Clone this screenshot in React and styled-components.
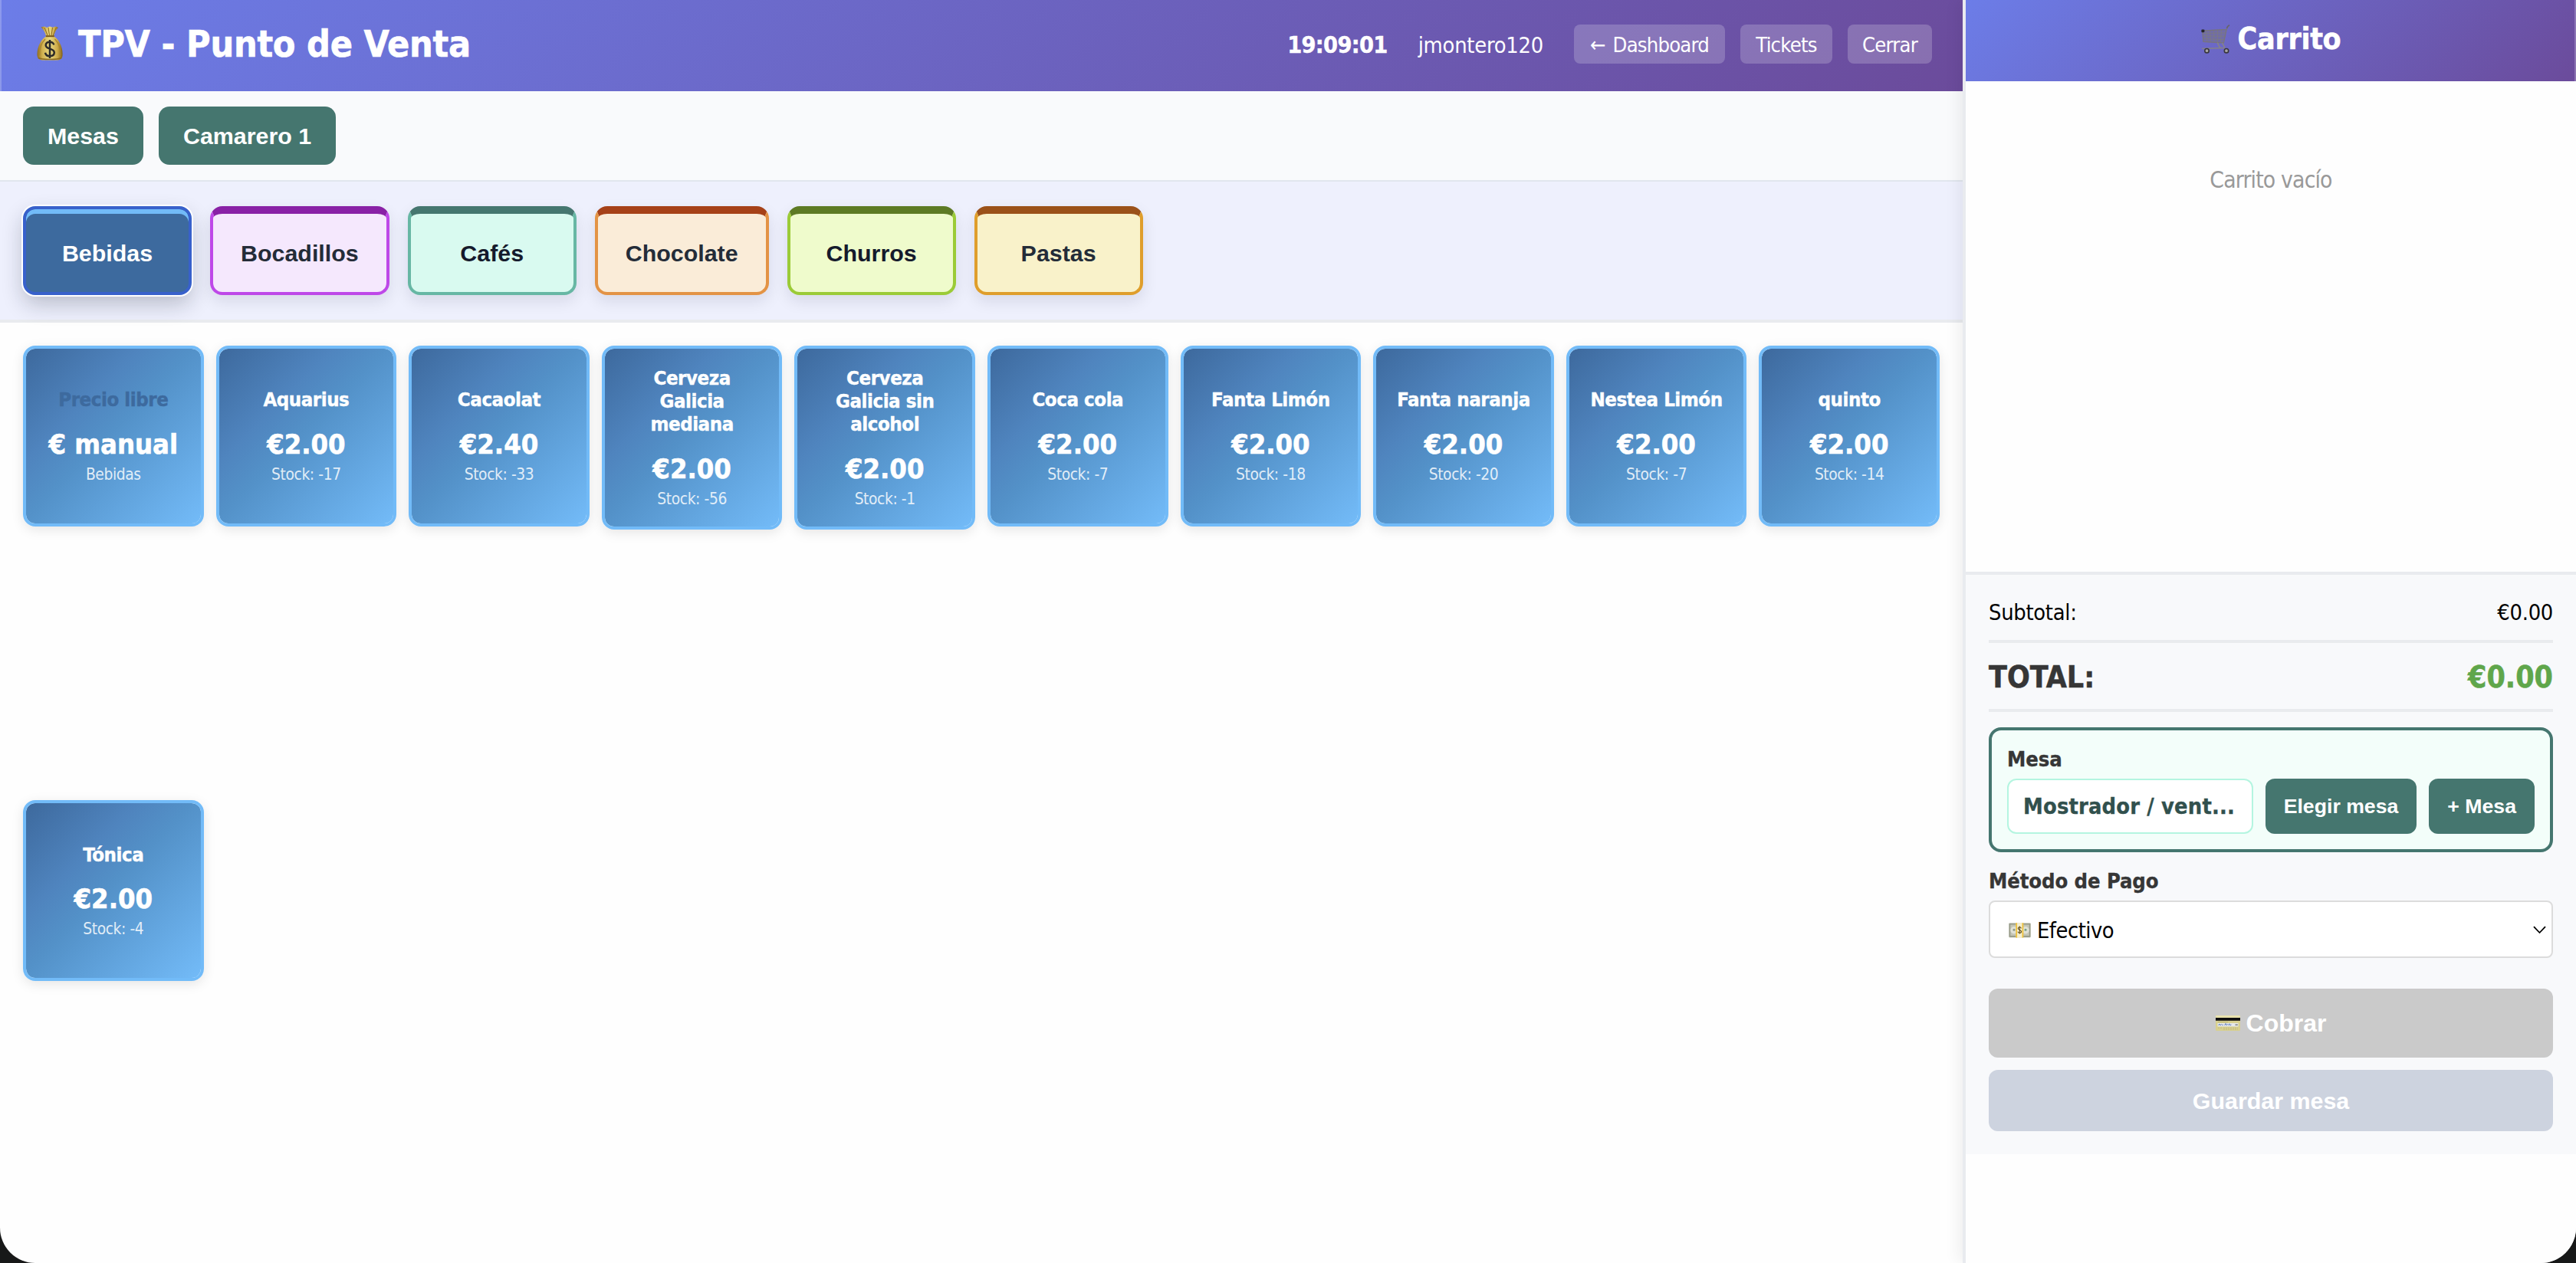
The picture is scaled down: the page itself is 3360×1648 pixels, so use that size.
import React from "react";
import styled, { createGlobalStyle } from "styled-components";

const tahoma = '"DejaVu Sans Condensed", "DejaVu Sans", sans-serif';
const arial = '"Liberation Sans", Arial, sans-serif';
const brandGradient = "linear-gradient(135deg, #6c7de8 0%, #6b4b9b 100%)";

const GlobalStyle = createGlobalStyle`
  *, *::before, *::after { box-sizing: border-box; }
  html { background: #171818; }
  body { margin: 0; background: #171818; font-family: ${tahoma}; }
  button { font-family: ${arial}; border: 0; padding: 0; margin: 0; }
  svg { display: block; flex: none; }
`;

const Screen = styled.div`
  display: flex;
  width: 100%;
  height: 100vh;
  overflow: hidden;
  background: #fefefe;
  border-radius: 0 0 46px 46px;
`;

const Main = styled.main`
  flex: 1;
  min-width: 0;
  display: flex;
  flex-direction: column;
`;

const Header = styled.header`
  display: flex;
  align-items: center;
  justify-content: space-between;
  height: 119px;
  padding: 0 40px 0 48px;
  color: #fff;
  background: ${brandGradient};
  box-shadow: inset 2px 0 0 rgba(255, 255, 255, 0.22);
`;

const Title = styled.h1`
  display: flex;
  align-items: center;
  gap: 20px;
  margin: 0 0 6px;
  font-size: 48px;
  font-weight: 700;
  letter-spacing: -0.25px;
  -webkit-text-stroke: 0.6px currentColor;
`;

const HeaderInfo = styled.div`
  display: flex;
  align-items: center;
  gap: 40px;
  margin-bottom: 2px;
`;

const Clock = styled.span`
  font-size: 30.4px;
  font-weight: 700;
  letter-spacing: -0.7px;
  -webkit-text-stroke: 0.4px currentColor;
`;

const UserName = styled.span`
  font-size: 28.8px;
  letter-spacing: -0.25px;
`;

const HeaderActions = styled.div`
  display: flex;
  gap: 20px;
  margin-bottom: 2px;
`;

const HeaderButton = styled.button`
  width: ${(p) => p.$width}px;
  height: 51px;
  padding-top: 2px;
  border-radius: 8px;
  color: #fff;
  background: rgba(255, 255, 255, 0.2);
  font-family: ${tahoma};
  font-size: 27.2px;
  letter-spacing: -0.8px;
  word-spacing: 3px;
  white-space: nowrap;
`;

const ToolBar = styled.div`
  display: flex;
  align-items: center;
  gap: 20px;
  height: 118px;
  padding: 0 30px;
  background: #f9fafc;
  border-bottom: 2px solid #e1e6ee;
`;

const ToolButton = styled.button`
  height: 76px;
  padding: 0 32px;
  border-radius: 14px;
  color: #fff;
  background: #45766f;
  font-size: 30.4px;
  font-weight: 700;
`;

const CategoryBar = styled.nav`
  display: flex;
  align-items: flex-start;
  gap: 24px;
  height: 184px;
  padding: 32px 30px 0;
  background: #eef0fd;
  border-bottom: 4px solid #e9ebef;
`;

const Category = styled.button`
  min-width: 220px;
  height: 116px;
  padding: 0 36px;
  border: 4px solid ${(p) => p.$border};
  border-top: 10px solid ${(p) => p.$top};
  border-radius: 16px;
  color: ${(p) => p.$color};
  background: ${(p) => p.$bg};
  box-shadow: 0 8px 20px rgba(15, 23, 42, 0.1);
  font-size: 30.4px;
  font-weight: 700;
`;

const ActiveCategory = styled(Category)`
  border-top-width: 4px;
  padding-top: 6px;
  box-shadow: inset 0 6px 0 #72bbf8, 0 0 0 2px #fff, 0 12px 28px rgba(15, 23, 42, 0.24);
`;

const ProductGrid = styled.section`
  flex: 1;
  display: grid;
  grid-template-columns: repeat(10, minmax(0, 1fr));
  gap: 16px;
  align-items: start;
  padding: 30px;
`;

const ProductCard = styled.article`
  display: flex;
  flex-direction: column;
  align-items: center;
  justify-content: center;
  min-height: 236px;
  padding: 23px 20px;
  border: 4px solid #72bbf8;
  border-radius: 16px;
  color: #fff;
  text-align: center;
  background: linear-gradient(135deg, #3d699d 0%, #4f84be 32%, #5391c8 48%, #73bbf8 100%) padding-box;
  box-shadow: 0 4px 16px rgba(0, 0, 0, 0.1);
`;

const ProductName = styled.div`
  margin-bottom: 21.5px;
  color: ${(p) => (p.$muted ? "#3d6a9e" : "#fff")};
  font-size: 25.6px;
  font-weight: 700;
  line-height: 30px;
  letter-spacing: -0.45px;
  -webkit-text-stroke: 0.4px currentColor;
`;

const ProductPrice = styled.div`
  margin-bottom: 4px;
  font-size: 36px;
  font-weight: 700;
  line-height: 44px;
  white-space: nowrap;
  -webkit-text-stroke: 0.6px currentColor;
`;

const ProductStock = styled.div`
  padding-top: 1px;
  color: rgba(255, 255, 255, 0.84);
  font-size: 20.8px;
  line-height: 25px;
  letter-spacing: -0.4px;
`;

const Cart = styled.aside`
  position: relative;
  display: flex;
  flex-direction: column;
  width: 800px;
  border-left: 4px solid #e9ebef;
  background: #fefefe;
  box-shadow: -4px 0 20px rgba(0, 0, 0, 0.07);
`;

const CartHeader = styled.h2`
  display: flex;
  align-items: center;
  justify-content: center;
  gap: 10px;
  height: 106px;
  margin: 0;
  padding-bottom: 5px;
  color: #fff;
  background: ${brandGradient};
  box-shadow: inset -2px 0 0 rgba(255, 255, 255, 0.22);
  font-size: 39px;
  font-weight: 700;
  letter-spacing: -0.3px;
  -webkit-text-stroke: 0.5px currentColor;
`;

const CartItems = styled.div`
  height: 640px;
  padding-top: 111px;
  color: #999;
  font-size: 29.8px;
  line-height: 36px;
  letter-spacing: -0.85px;
  text-align: center;
`;

const Checkout = styled.div`
  padding: 0 30px 30px;
  border-top: 4px solid #e9ebef;
  background: #f8f9fb;
`;

const SubtotalRow = styled.div`
  display: flex;
  align-items: center;
  justify-content: space-between;
  height: 85px;
  padding-top: 13px;
  font-size: 28.8px;
  letter-spacing: -0.3px;
`;

const TotalRow = styled.div`
  display: flex;
  align-items: center;
  justify-content: space-between;
  height: 94px;
  padding-top: 2px;
  border: solid #e9ebee;
  border-width: 4px 0;
  color: #363636;
  font-size: 39px;
  font-weight: 700;
  -webkit-text-stroke: 0.5px currentColor;
`;

const TotalAmount = styled.span`
  color: #5fa64b;
`;

const TableBox = styled.div`
  height: 163px;
  margin: 20px 0;
  padding: 20px;
  border: 4px solid #45766f;
  border-radius: 16px;
  background: #f3fefa;
`;

const Label = styled.div`
  height: 35px;
  margin-bottom: 8px;
  color: #363636;
  font-size: 27.2px;
  font-weight: 700;
  line-height: 35px;
  letter-spacing: -0.1px;
  -webkit-text-stroke: 0.3px currentColor;
`;

const TableControls = styled.div`
  display: flex;
  gap: 16px;
  height: 72px;
`;

const TableName = styled.div`
  flex: 1;
  padding: 0 19px;
  border: 2px solid #b4f5e0;
  border-radius: 12px;
  color: #31504d;
  background: #fff;
  font-size: 28.8px;
  font-weight: 700;
  line-height: 68px;
  letter-spacing: 0.15px;
  white-space: nowrap;
  -webkit-text-stroke: 0.3px currentColor;
`;

const TableButton = styled.button`
  padding: 0 24px;
  border-radius: 12px;
  color: #fff;
  background: #45766f;
  font-size: 26.67px;
  font-weight: 700;
  white-space: nowrap;
`;

const PaymentSelect = styled.div`
  display: flex;
  align-items: center;
  height: 75px;
  padding: 2px 7px 0 24px;
  border: 2px solid #dcdcdc;
  border-radius: 8px;
  background: #fff;
`;

const PaymentValue = styled.span`
  flex: 1;
  margin-left: 8px;
  font-size: 28.8px;
  letter-spacing: -0.5px;
`;

const ActionButton = styled.button`
  display: flex;
  align-items: center;
  justify-content: center;
  gap: 8px;
  width: 100%;
  height: ${(p) => p.$height}px;
  margin-top: ${(p) => p.$gap}px;
  border-radius: 12px;
  color: #fff;
  background: ${(p) => p.$bg};
  font-size: ${(p) => p.$size}px;
  font-weight: 700;
`;

const MoneyBagIcon = () => (
  <svg width="34" height="45" viewBox="0 0 34 45">
    <defs>
      <linearGradient id="bag" x1="0" x2="1">
        <stop offset="0" stopColor="#8d6a1f" />
        <stop offset="0.2" stopColor="#d0b04e" />
        <stop offset="0.5" stopColor="#e9d983" />
        <stop offset="0.8" stopColor="#cdaa47" />
        <stop offset="1" stopColor="#80601c" />
      </linearGradient>
    </defs>
    <path d="M5.5 1.6 10 .6l3 1.4 4-1.6 4 1.4 3.600-1.300 3.300 1.600C25 5 23 9 22.300 13H12C11 9 8.800 4.600 5.500 1.600Z" fill="url(#bag)" />
    <path d="m10 2 4 10M15 2l1.500 10M20.500 2l-1.500 10M25 2.500 21.300 12" stroke="#8a681f" strokeWidth="1" fill="none" />
    <path d="M12 13.500h10.500C28 16.500 33.500 26 33.600 36c.1 6-1.400 8.400-8 8.600H8.800C2.200 44.400.3 42 .5 36 .8 26 6.300 16.500 12 13.500Z" fill="url(#bag)" />
    <path d="M11 17C6 22 3.400 29 3.500 38M23.500 17c5 5 7.600 12 7.500 21" stroke="#a78431" strokeWidth="1.200" fill="none" />
    <path d="M2 41.500c5 2.600 25 2.600 30 0" stroke="#8d6c21" strokeWidth="1.600" fill="none" />
    <path d="M11.800 13.200h11" stroke="#76561a" strokeWidth="2" />
    <path d="M22.300 24.500c-.7-2.800-2.700-3.800-5.400-3.800-3 0-5.200 1.500-5.200 4.300 0 6 11.100 3.300 11.100 9.600 0 3-2.300 4.600-5.800 4.600-3.300 0-5.500-1.500-6-4.500M17 18v24" stroke="#2c2a28" strokeWidth="2.500" fill="none" />
  </svg>
);

const CartIcon = () => (
  <svg width="38" height="38" viewBox="0 0 38 38" fill="none">
    <path d="M2 7.500 33 6l-3.500 18L3 22Z" fill="#77727f" fillOpacity="0.45" />
    <path d="M2 11.500l30-.6M2.400 15l29 .2M2.800 18.500l27.800 1.200M6.500 8 8 22.500M11.500 7.600l1 15.100M16.500 7.400l.5 15.600M21.500 7l-.2 16.200M26.500 6.700l-1.200 17" stroke="#7b7884" strokeWidth="0.9" />
    <path d="M37 .8c-2.600 1.500-3.400 3.600-4 6.200L29.400 24 3 22.300 1.700 8 33 6.300" stroke="#77747d" strokeWidth="1.300" />
    <path d="M21 24c3 2.500 1 5 4.500 6M28 24c-.5 3 3.500 3.500 2 6.500L1 31.500" stroke="#85828a" strokeWidth="1.700" />
    <path d="M37 .8c-1.800.9-3 2-3.500 4" stroke="#66646b" strokeWidth="1.600" />
    <rect x=".4" y="6.600" width="4" height="3.600" rx="1" fill="#252529" />
    <circle cx="7.500" cy="34.200" r="2.700" fill="#a9a6a6" stroke="#38363b" strokeWidth="1.600" />
    <circle cx="33" cy="34.200" r="2.700" fill="#a9a6a6" stroke="#38363b" strokeWidth="1.600" />
  </svg>
);

const CashIcon = () => (
  <svg width="29" height="20" viewBox="0 0 29 20">
    <rect x=".3" y=".5" width="28.400" height="18.700" rx="1" fill="#a3a693" />
    <rect x="1.800" y="2" width="25.400" height="15.600" fill="#c3c5b5" stroke="#858977" strokeWidth=".7" />
    <circle cx="7" cy="9.800" r="4.700" fill="#dfe0d6" />
    <circle cx="22" cy="9.800" r="4.700" fill="#dfe0d6" />
    <circle cx="7" cy="9.200" r="1.500" fill="#8d9984" />
    <circle cx="22" cy="9.200" r="1.500" fill="#76a083" />
    <rect x="9.500" y=".2" width="9.600" height="19.300" fill="#f5efcf" />
    <path d="M10.200.2v19.300M18.400.2v19.300" stroke="#eebf35" strokeWidth="1.700" />
    <path d="M16.400 7.300c-.3-1-1-1.500-2.100-1.500-1.200 0-2 .6-2 1.700 0 2.300 4.300 1.500 4.300 4 0 1.200-.9 1.900-2.300 1.900-1.300 0-2.100-.6-2.300-1.700M14.300 4.600v10" stroke="#5e4a1c" strokeWidth="1.100" fill="none" />
  </svg>
);

const CardIcon = () => (
  <svg width="32" height="20" viewBox="0 0 32 20">
    <rect width="32" height="20" rx="1.200" fill="#d8d08f" />
    <rect width="32" height="3" rx="1" fill="#e9e3ae" />
    <rect y="3" width="32" height="3.800" fill="#111" />
    <path d="M3 8.600h13" stroke="#b5ae73" strokeWidth=".8" />
    <rect x="2.500" y="10" width="27" height="4.400" fill="#e6e9ea" />
    <path d="m3.500 13 1.500-2 1 2 1.500-1.600 1 1.200 1.500-.6m1.500 1 1.600-2.600.8 2.400 1.600-1.400 1 1.200 1.500-1.800.5 2 2-.8" stroke="#5b79bd" strokeWidth=".9" fill="none" />
    <path d="M25.500 12.200h3.300" stroke="#666" strokeWidth="1.200" />
    <path d="M3 16.300h5M10 16.300h19M10 18.200h19" stroke="#beb67a" strokeWidth=".8" strokeDasharray="2 1" />
  </svg>
);

const ChevronIcon = () => (
  <svg width="17" height="11" viewBox="0 0 17 11" fill="none">
    <path d="m1 1.200 7.500 7.800L16 1.200" stroke="#000" strokeWidth="1.800" strokeLinejoin="round" />
  </svg>
);

const categories = [
  { name: "Bocadillos", bg: "#f5e8fd", border: "#be48e8", top: "#8921a6", color: "#242c38" },
  { name: "Cafés", bg: "#d9faf0", border: "#67b7a4", top: "#45766f", color: "#151a2c" },
  { name: "Chocolate", bg: "#faecd8", border: "#e39345", top: "#a64118", color: "#242c38" },
  { name: "Churros", bg: "#effbcc", border: "#9bcb37", top: "#5d7a24", color: "#151a2c" },
  { name: "Pastas", bg: "#f9f2ca", border: "#df9e2b", top: "#9b5119", color: "#242c38" },
];

const products = [
  { name: "Precio libre", price: "€ manual", note: "Bebidas", muted: true },
  { name: "Aquarius", price: "€2.00", note: "Stock: -17" },
  { name: "Cacaolat", price: "€2.40", note: "Stock: -33" },
  { name: "Cerveza Galicia mediana", price: "€2.00", note: "Stock: -56" },
  { name: "Cerveza Galicia sin alcohol", price: "€2.00", note: "Stock: -1" },
  { name: "Coca cola", price: "€2.00", note: "Stock: -7" },
  { name: "Fanta Limón", price: "€2.00", note: "Stock: -18" },
  { name: "Fanta naranja", price: "€2.00", note: "Stock: -20" },
  { name: "Nestea Limón", price: "€2.00", note: "Stock: -7" },
  { name: "quinto", price: "€2.00", note: "Stock: -14" },
  { name: "Tónica", price: "€2.00", note: "Stock: -4" },
];

export default function App() {
  return (
    <>
      <GlobalStyle />
      <Screen>
        <Main>
          <Header>
            <Title>
              <MoneyBagIcon />
              TPV - Punto de Venta
            </Title>
            <HeaderInfo>
              <Clock>19:09:01</Clock>
              <UserName>jmontero120</UserName>
              <HeaderActions>
                <HeaderButton $width={197}>← Dashboard</HeaderButton>
                <HeaderButton $width={120}>Tickets</HeaderButton>
                <HeaderButton $width={110}>Cerrar</HeaderButton>
              </HeaderActions>
            </HeaderInfo>
          </Header>
          <ToolBar>
            <ToolButton>Mesas</ToolButton>
            <ToolButton>Camarero 1</ToolButton>
          </ToolBar>
          <CategoryBar>
            <ActiveCategory $bg="#3d6a9e" $border="#3861cb" $top="#3861cb" $color="#fff">
              Bebidas
            </ActiveCategory>
            {categories.map((c) => (
              <Category key={c.name} $bg={c.bg} $border={c.border} $top={c.top} $color={c.color}>
                {c.name}
              </Category>
            ))}
          </CategoryBar>
          <ProductGrid>
            {products.map((p) => (
              <ProductCard key={p.name}>
                <ProductName $muted={p.muted}>{p.name}</ProductName>
                <ProductPrice>{p.price}</ProductPrice>
                <ProductStock>{p.note}</ProductStock>
              </ProductCard>
            ))}
          </ProductGrid>
        </Main>
        <Cart>
          <CartHeader>
            <CartIcon />
            Carrito
          </CartHeader>
          <CartItems>Carrito vacío</CartItems>
          <Checkout>
            <SubtotalRow>
              <span>Subtotal:</span>
              <span>€0.00</span>
            </SubtotalRow>
            <TotalRow>
              <span>TOTAL:</span>
              <TotalAmount>€0.00</TotalAmount>
            </TotalRow>
            <TableBox>
              <Label>Mesa</Label>
              <TableControls>
                <TableName>Mostrador / vent...</TableName>
                <TableButton>Elegir mesa</TableButton>
                <TableButton>+ Mesa</TableButton>
              </TableControls>
            </TableBox>
            <Label>Método de Pago</Label>
            <PaymentSelect>
              <CashIcon />
              <PaymentValue>Efectivo</PaymentValue>
              <ChevronIcon />
            </PaymentSelect>
            <ActionButton $height={90} $gap={40} $bg="#cacaca" $size={32}>
              <CardIcon />
              Cobrar
            </ActionButton>
            <ActionButton $height={80} $gap={16} $bg="#cdd3df" $size={30.4}>
              Guardar mesa
            </ActionButton>
          </Checkout>
        </Cart>
      </Screen>
    </>
  );
}
